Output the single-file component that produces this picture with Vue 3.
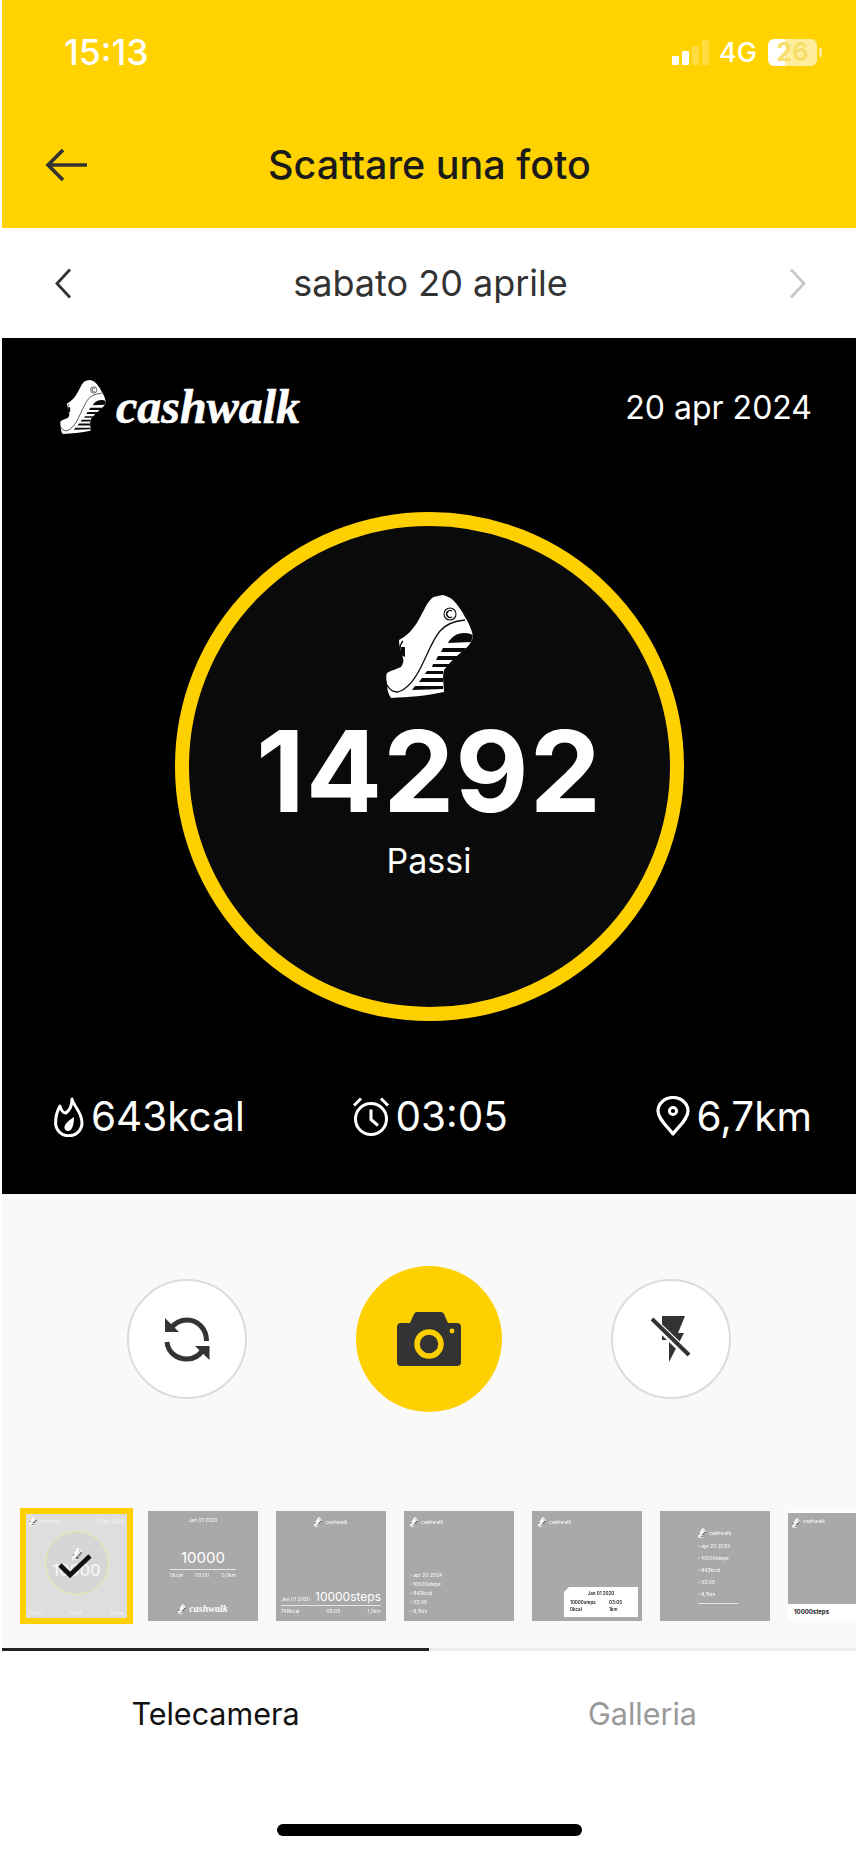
<script setup>
const stats = [
  { id: 'flame', text: '643kcal' },
  { id: 'alarm', text: '03:05' },
  { id: 'pin', text: '6,7km' }
]

const listRows = ['apr 20 2024', '10000steps', '643kcal', '03:05', '6,7km']
</script>

<template>
  <div class="page">
    <svg class="defs" aria-hidden="true">
      <symbol id="shoe" viewBox="0 0 87 103">
        <path fill="#fff" d="M46 3 C49 1 53 1 57 0 C61 1 65 3 67 5 C72 10 76 16 79 22 C83 28 86 35 87 42 C85 50 78 55 72 60 C66 65 62 70 58 75 C56 82 58 90 58 97 C40 101 22 102 5 103 C2 99 1 94 1 88 C0 84 0 80 1 78 C6 75 11 74 15 72 C17 69 18 66 17 63 C15 57 13 51 13 45 L18 42 C22 39 25 36 28 32 C32 27 35 20 38 15 C40 10 43 6 46 3 Z" />
        <path fill="none" stroke="#0a0a0a" stroke-width="1.3" d="M79 25 C68 26 59 30 54 36 C47 44 43 56 35 72 C29 84 22 94 12 97 C7 97 3 94 1 90" />
        <path fill="#0a0a0a" d="M62 48 C65 42 71 38 78 38 C83 38 86 39 87 41 L85 47 Z" />
        <path fill="#0a0a0a" d="M57 53 L80 53 L77 57 L55 57 Z M52 61 L73 61 L69 65 L50 65 Z M47 69 L65 69 L61 72 L46 72 Z M41 76 L57 76 L57 79 L39 79 Z M36 83 L57 83 L57 87 L33 87 Z M29 91 L57 91 L57 94 L26 95 Z" />
        <circle cx="64" cy="19" r="6" fill="none" stroke="#0a0a0a" stroke-width="1.1" />
        <path fill="none" stroke="#0a0a0a" stroke-width="1.4" d="M66 16 A3.5 3.5 0 1 0 66 22" />
        <path fill="none" stroke="#0a0a0a" stroke-width="1.3" d="M12 50 C8 53 8 60 11 64 M17 46 C13 50 13 58 16 63" />
        <path fill="#0a0a0a" d="M15 52 L19 52 L19 62 L15 60 Z" />
      </symbol>
      <symbol id="flame" viewBox="0 0 30 41">
        <path fill="none" stroke="#fff" stroke-width="3" stroke-linejoin="round" d="M18 3 C20 11 28 16 28 27 A13.2 12.8 0 0 1 1.6 27 C1.6 20 3 15 6 10 C7 14 9 17 12 17 C16 14 18 9 18 3 Z" />
        <path fill="#fff" d="M20 21 C20 29 18 36 13 35 C8 33 10 27 20 21 Z" />
      </symbol>
      <symbol id="alarm" viewBox="0 0 38 40">
        <g fill="none" stroke="#fff" stroke-width="3">
          <circle cx="19" cy="22.5" r="15.5" />
          <path d="M19 13 V23 L26 29" />
          <path d="M2 9 L9 2 M36 9 L29 2" />
        </g>
      </symbol>
      <symbol id="pin" viewBox="0 0 34 41">
        <path fill="none" stroke="#fff" stroke-width="3.2" stroke-linejoin="round" d="M17 38 C11 30 2 23 2 15 A15 13.5 0 0 1 32 15 C32 23 23 30 17 38 Z" />
        <circle cx="17" cy="15" r="3.6" fill="none" stroke="#fff" stroke-width="3" />
      </symbol>
    </svg>

    <header class="top">
      <div class="status">
        <span class="clock">15:13</span>
        <div class="status-right">
          <div class="signal">
            <i class="bar b1"></i><i class="bar b2"></i><i class="bar b3"></i><i class="bar b4"></i>
          </div>
          <span class="net">4G</span>
          <div class="battery">26</div>
          <i class="nub"></i>
        </div>
      </div>
      <div class="nav">
        <svg class="back" width="42" height="34" viewBox="0 0 42 34">
          <path fill="none" stroke="#333" stroke-width="3.6" d="M42 17 H3 M18 2 L3 17 L18 32" />
        </svg>
        <h1 class="title">Scattare una foto</h1>
      </div>
    </header>

    <div class="date-row">
      <svg width="18" height="31" viewBox="0 0 18 31">
        <path fill="none" stroke="#333" stroke-width="2.8" d="M16 1.5 L3 15.5 L16 29.5" />
      </svg>
      <span class="date-text">sabato 20 aprile</span>
      <svg width="18" height="31" viewBox="0 0 18 31">
        <path fill="none" stroke="#c9c9c9" stroke-width="2.8" d="M2 1.5 L15 15.5 L2 29.5" />
      </svg>
    </div>

    <section class="panel">
      <div class="panel-head">
        <div class="brand">
          <svg class="brand-shoe"><use href="#shoe" /></svg>
          <span class="brand-name">cashwalk</span>
        </div>
        <span class="panel-date">20 apr 2024</span>
      </div>
      <div class="ring">
        <svg class="ring-shoe"><use href="#shoe" /></svg>
        <div class="steps">14292</div>
        <div class="steps-label">Passi</div>
      </div>
      <div class="stats">
        <div v-for="s in stats" :key="s.id" class="stat">
          <svg :class="['stat-icon', s.id]"><use :href="'#' + s.id" /></svg>
          <span>{{ s.text }}</span>
        </div>
      </div>
    </section>

    <section class="controls">
      <div class="buttons">
        <button class="round">
          <svg width="46" height="46" viewBox="0 0 46 46">
            <g fill="none" stroke="#333" stroke-width="5">
              <path d="M42.5 25 C42.5 13 34 4 23 4 C16 4 11 7 7 12" />
              <path d="M3 26 C4 36 12 43 23 43 C30 43 35 40 39 34" />
            </g>
            <path fill="#333" d="M1 2 L1 16 L15 16 Z M45.5 30 L45.5 44 L31 30 Z" />
          </svg>
        </button>
        <button class="round shutter">
          <svg width="64" height="54" viewBox="0 0 64 54">
            <path fill="#333" d="M20 0 H44 Q46 0 47 2 L51 11 H60 Q64 11 64 15 V50 Q64 54 60 54 H4 Q0 54 0 50 V15 Q0 11 4 11 H13 L17 2 Q18 0 20 0 Z" />
            <circle cx="32" cy="32" r="12" fill="#333" stroke="#ffd000" stroke-width="5.5" />
            <circle cx="55" cy="19" r="2.4" fill="#ffd000" />
          </svg>
        </button>
        <button class="round">
          <svg width="40" height="48" viewBox="0 0 40 48">
            <path fill="#333" d="M11 1 H34 L27 18 H33 L18 47 V25 H11 Z" />
            <path stroke="#fff" stroke-width="8" d="M3 7 L36 39" />
            <path stroke="#333" stroke-width="4" d="M1 4 L38 40" />
          </svg>
        </button>
      </div>

      <div class="thumbs">
        <div class="thumb selected">
          <div class="sel-inner">
            <div class="sel-head">
              <svg class="mini-shoe"><use href="#shoe" /></svg>
              <span>cashwalk</span>
              <span class="sel-date">20 apr 2024</span>
            </div>
            <div class="sel-ring">
              <svg class="mini-shoe ring-mini"><use href="#shoe" /></svg>
              <span class="sel-num">10000</span>
              <svg class="check" width="34" height="26" viewBox="0 0 34 26">
                <path fill="none" stroke="#111" stroke-width="4.6" d="M2 12 L12 22 L32 3" />
              </svg>
            </div>
            <div class="sel-foot"><span>0kcal</span><span>00:00</span><span>0,0km</span></div>
          </div>
        </div>

        <div class="thumb t-center">
          <span class="tiny">Jan 01 2020</span>
          <div class="t-mid">
            <span class="t-num">10000</span>
            <i class="rule"></i>
            <div class="tiny-row"><span>0kcal</span><span>00:00</span><span>0,0km</span></div>
          </div>
          <div class="logo-row">
            <svg class="mini-shoe"><use href="#shoe" /></svg>
            <span class="logo-txt">cashwalk</span>
          </div>
        </div>

        <div class="thumb t-bottom">
          <div class="logo-row small">
            <svg class="mini-shoe"><use href="#shoe" /></svg>
            <span class="tiny">cashwalk</span>
          </div>
          <div class="t-foot">
            <div class="t-line"><span class="tiny">Jan 01 2020</span><span class="t-big">10000steps</span></div>
            <i class="rule"></i>
            <div class="tiny-row"><span>746kcal</span><span>03:05</span><span>1,0km</span></div>
          </div>
        </div>

        <div class="thumb t-list">
          <div class="logo-row small">
            <svg class="mini-shoe"><use href="#shoe" /></svg>
            <span class="tiny">cashwalk</span>
          </div>
          <div class="list">
            <span v-for="r in listRows" :key="r" class="tiny">▫ {{ r }}</span>
          </div>
        </div>

        <div class="thumb t-card">
          <div class="logo-row small">
            <svg class="mini-shoe"><use href="#shoe" /></svg>
            <span class="tiny">cashwalk</span>
          </div>
          <div class="card">
            <span class="card-date">Jan 01 2020</span>
            <div class="card-grid">
              <span>10000steps</span><span>03:05</span>
              <span>0kcal</span><span>1km</span>
            </div>
          </div>
        </div>

        <div class="thumb t-stack">
          <div class="logo-row small">
            <svg class="mini-shoe"><use href="#shoe" /></svg>
            <span class="tiny">cashwalk</span>
          </div>
          <span v-for="r in listRows" :key="r" class="tiny">▫ {{ r }}</span>
          <i class="rule"></i>
        </div>

        <div class="thumb t-strip">
          <div class="strip-top">
            <svg class="mini-shoe"><use href="#shoe" /></svg>
            <span class="tiny">cashwalk</span>
          </div>
          <div class="strip-text">10000steps</div>
        </div>
      </div>
    </section>

    <div class="tabs">
      <div class="tab active">Telecamera</div>
      <div class="tab">Galleria</div>
    </div>
    <div class="home-bar"></div>
  </div>
</template>

<style>
html, body {
  margin: 0;
  background: #fff;
}
</style>

<style scoped>
.page {
  width: 856px;
  height: 1854px;
  padding-left: 2px;
  box-sizing: border-box;
  background: #fff;
  overflow: hidden;
  font-family: Inter, "Liberation Sans", sans-serif;
}
.defs {
  position: absolute;
  width: 0;
  height: 0;
}

/* top bar */
.top {
  height: 228px;
  background: #ffd200;
}
.status {
  height: 104px;
  display: flex;
  align-items: center;
  justify-content: space-between;
  padding: 0 34px 0 62px;
  color: #fff;
}
.clock {
  font-size: 35.5px;
  font-weight: 500;
}
.status-right {
  display: flex;
  align-items: center;
}
.signal {
  display: flex;
  align-items: flex-end;
  gap: 3px;
  height: 25px;
  margin-right: 10px;
}
.bar {
  width: 7px;
  background: rgba(255, 255, 255, 0.25);
  border-radius: 1px;
}
.b1 { height: 9px; background: #fff; }
.b2 { height: 14px; background: #fff; }
.b3 { height: 19px; }
.b4 { height: 25px; }
.net {
  font-size: 27px;
  font-weight: 500;
  margin-right: 11px;
}
.battery {
  width: 49px;
  height: 27px;
  border-radius: 6px;
  text-align: center;
  font-size: 25px;
  line-height: 27px;
  font-weight: 700;
  color: #f7dd6c;
  background: linear-gradient(90deg, #fff 0 34%, rgba(255, 255, 255, 0.62) 34%);
}
.nub {
  width: 3px;
  height: 9px;
  margin-left: 2px;
  background: rgba(255, 255, 255, 0.6);
  border-radius: 0 2px 2px 0;
}
.nav {
  height: 122px;
  display: flex;
  align-items: center;
  padding-left: 43px;
}
.back {
  flex: none;
}
.title {
  margin: 0 0 0 181px;
  font-size: 39.5px;
  font-weight: 500;
  color: #1a1a1a;
}

/* date */
.date-row {
  height: 110px;
  display: flex;
  align-items: center;
  justify-content: space-between;
  padding: 0 49px 0 52px;
}
.date-text {
  font-size: 36px;
  color: #333;
}

/* photo panel */
.panel {
  height: 856px;
  background: #000;
  color: #fff;
  overflow: hidden;
}
.panel-head {
  margin-top: 42px;
  height: 54px;
  display: flex;
  align-items: center;
  justify-content: space-between;
  padding: 0 44px 0 58px;
}
.brand {
  display: flex;
  align-items: center;
  gap: 10px;
}
.brand-shoe {
  width: 46px;
  height: 54px;
}
.brand-name {
  font-family: "Liberation Serif", serif;
  font-style: italic;
  font-weight: 700;
  font-size: 48px;
  line-height: 54px;
  -webkit-text-stroke: 0.6px #fff;
}
.panel-date {
  font-size: 32px;
}
.ring {
  width: 509px;
  height: 509px;
  margin: 78px auto 0;
  box-sizing: border-box;
  border: 14px solid #ffd000;
  border-radius: 50%;
  background: #0a0a0a;
  display: flex;
  flex-direction: column;
  align-items: center;
  padding-top: 69px;
}
.ring-shoe {
  width: 87px;
  height: 103px;
}
.steps {
  font-size: 113px;
  font-weight: 700;
  line-height: 112px;
  letter-spacing: 1px;
  margin-top: 17px;
}
.steps-label {
  font-size: 34px;
  line-height: 42px;
  margin-top: 13px;
}
.stats {
  margin-top: 75px;
  display: flex;
  justify-content: space-between;
  padding: 0 44px 0 52px;
}
.stat {
  display: flex;
  align-items: center;
  gap: 7px;
  font-size: 40.5px;
  line-height: 41px;
}
.stat:nth-child(2) {
  margin-right: 40px;
  gap: 5px;
}
.stat-icon {
  height: 41px;
  flex: none;
}
.flame { width: 30px; }
.alarm { width: 38px; }
.pin { width: 34px; }

/* controls */
.controls {
  height: 454px;
  box-sizing: border-box;
  background: #f9f9f9;
  padding-top: 72px;
}
.buttons {
  display: flex;
  align-items: center;
  justify-content: center;
  gap: 109px;
}
.round {
  width: 120px;
  height: 120px;
  padding: 0;
  box-sizing: border-box;
  display: flex;
  align-items: center;
  justify-content: center;
  background: #fff;
  border: 2px solid #dcdcdc;
  border-radius: 50%;
}
.shutter {
  width: 146px;
  height: 146px;
  background: #ffd000;
  border: none;
}

/* thumbnails */
.thumbs {
  margin-top: 96px;
  display: flex;
  align-items: center;
  gap: 18px;
  padding-left: 18px;
  overflow: hidden;
}
.thumb {
  flex: none;
  width: 110px;
  height: 110px;
  box-sizing: border-box;
  background: #a9a9a9;
  color: #fff;
  display: flex;
  flex-direction: column;
}
.tiny {
  font-size: 5px;
  line-height: 7px;
  white-space: nowrap;
  filter: blur(0.3px);
}
.tiny-row {
  display: flex;
  justify-content: space-between;
  font-size: 5px;
  line-height: 7px;
  filter: blur(0.3px);
}
.rule {
  display: block;
  height: 1px;
  background: #e4e4e4;
}
.mini-shoe {
  width: 8px;
  height: 10px;
  flex: none;
}
.logo-row {
  display: flex;
  align-items: center;
  justify-content: center;
  gap: 3px;
}
.logo-txt {
  font-family: "Liberation Serif", serif;
  font-style: italic;
  font-weight: 700;
  font-size: 10px;
}

.selected {
  width: 113px;
  height: 116px;
  margin-right: -3px;
  border: 6px solid #ffd000;
  background: #dedede;
}
.sel-inner {
  flex: 1;
  display: flex;
  flex-direction: column;
  padding: 2px 3px;
}
.sel-head, .sel-foot {
  display: flex;
  align-items: center;
  justify-content: space-between;
  font-size: 5px;
  color: #f4f4f4;
  filter: blur(0.3px);
}
.sel-head {
  justify-content: flex-start;
  gap: 2px;
}
.sel-date {
  margin-left: auto;
}
.sel-foot {
  margin-top: auto;
}
.sel-ring {
  position: relative;
  width: 64px;
  height: 64px;
  margin: 5px auto 0;
  box-sizing: border-box;
  border: 1px solid #efe8a6;
  border-radius: 50%;
  background: #d6d6d6;
  display: flex;
  flex-direction: column;
  align-items: center;
  justify-content: center;
}
.sel-num {
  font-size: 16px;
  line-height: 18px;
  font-weight: 500;
  color: #f6f6f6;
}
.ring-mini {
  width: 10px;
  height: 12px;
  margin-bottom: 1px;
}
.check {
  position: absolute;
  left: 12px;
  top: 21px;
}

.t-center {
  align-items: center;
  justify-content: space-between;
  padding: 6px 0 7px;
}
.t-mid {
  width: 66px;
  display: flex;
  flex-direction: column;
  align-items: center;
  gap: 2px;
}
.t-mid .rule, .t-mid .tiny-row {
  width: 100%;
}
.t-num {
  font-size: 15px;
  line-height: 19px;
}
.t-bottom {
  justify-content: space-between;
  padding: 6px 5px 6px;
}
.t-foot {
  display: flex;
  flex-direction: column;
  gap: 2px;
}
.t-line {
  display: flex;
  align-items: flex-end;
  justify-content: space-between;
}
.t-big {
  font-size: 12px;
  line-height: 13px;
}
.t-list {
  justify-content: space-between;
  padding: 6px 6px 6px;
}
.small {
  justify-content: flex-start;
}
.t-bottom .small {
  justify-content: center;
}
.list {
  display: flex;
  flex-direction: column;
  gap: 2px;
}
.t-card {
  justify-content: space-between;
  padding: 6px 4px 4px 6px;
  align-items: stretch;
}
.card {
  align-self: flex-end;
  width: 74px;
  height: 30px;
  box-sizing: border-box;
  padding: 4px 6px;
  background: #fff;
  color: #222;
  clip-path: polygon(5px 0, 100% 0, 100% 100%, 0 100%, 0 5px);
  font-size: 4.5px;
  filter: blur(0.2px);
}
.card-date {
  display: block;
  text-align: center;
  font-weight: 600;
  margin-bottom: 4px;
}
.card-grid {
  display: grid;
  grid-template-columns: 1.6fr 1fr;
  gap: 2px;
  font-weight: 600;
}
.t-stack {
  justify-content: center;
  gap: 5px;
  padding: 0 32px 0 38px;
}
.strip-top {
  height: 91px;
  margin-top: 2px;
  background: #a9a9a9;
  padding: 5px 4px;
  display: flex;
  align-items: flex-start;
  gap: 3px;
  box-sizing: border-box;
}
.t-strip {
  background: #fff;
}
.strip-text {
  color: #222;
  font-size: 6px;
  font-weight: 700;
  line-height: 15px;
  padding-left: 6px;
  white-space: nowrap;
}

/* tabs */
.tabs {
  display: grid;
  grid-template-columns: 1fr 1fr;
}
.tab {
  height: 130px;
  box-sizing: border-box;
  border-top: 3px solid #eeeeee;
  display: flex;
  align-items: center;
  justify-content: center;
  padding-bottom: 3px;
  font-size: 30.5px;
  color: #999;
}
.tab.active {
  border-top-color: #222;
  color: #111;
}
.home-bar {
  width: 305px;
  height: 12px;
  margin: 46px auto 0;
  background: #000;
  border-radius: 6px;
}
</style>
